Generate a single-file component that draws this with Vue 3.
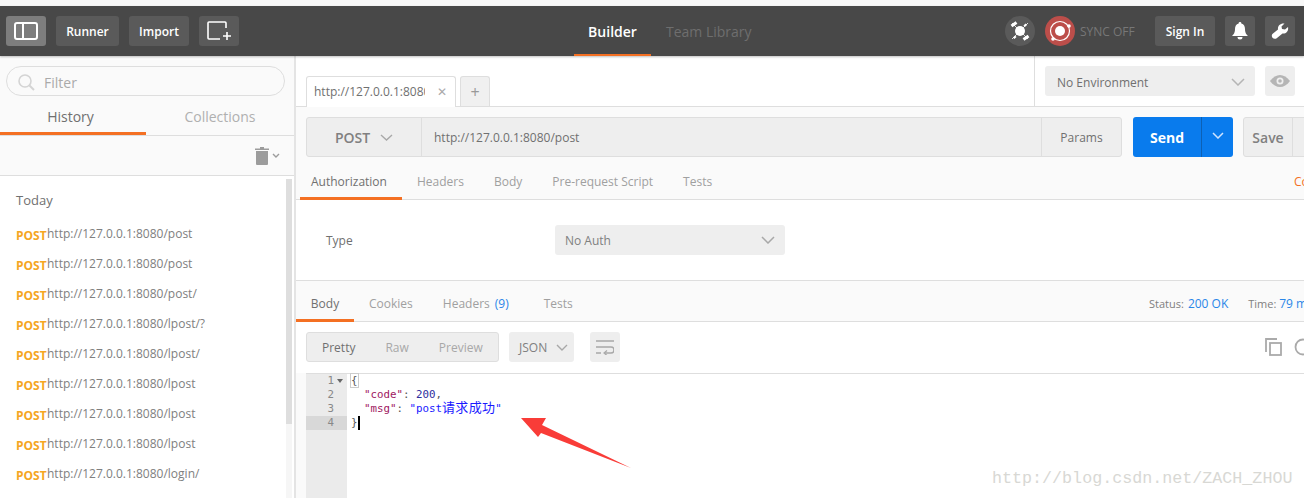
<script setup>
const history = ['post','post','post/','lpost/?','lpost/','lpost','lpost','lpost','login/']
</script>
<template>
  <div class="page">
    <div class="strip"></div>
    <header class="top">
      <div class="left">
        <button class="btn icon active"><svg width="24" height="18" viewBox="0 0 24 18"><rect x="1" y="1" width="22" height="16" rx="2" fill="none" stroke="#fff" stroke-width="2"/><path d="M9 1v16" stroke="#fff" stroke-width="2"/></svg></button>
        <button class="btn runner">Runner</button>
        <button class="btn import">Import</button>
        <button class="btn icon"><svg width="26" height="20" viewBox="0 0 26 20"><path d="M20 7V2a1 1 0 0 0-1-1H3a1 1 0 0 0-1 1v15a1 1 0 0 0 1 1h11" fill="none" stroke="#fff" stroke-width="1.6"/><path d="M21 11v8M17 15h8" stroke="#fff" stroke-width="1.6"/></svg></button>
      </div>
      <nav class="center">
        <span class="builder">Builder</span>
        <span class="team">Team Library</span>
      </nav>
      <div class="right">
        <span class="circle grey"><svg width="22" height="22" viewBox="0 0 22 22"><path d="M3 3l16 16M19 3 3 19" stroke="#fff" stroke-width=".8"/><circle cx="11" cy="11" r="5" fill="#fff"/><g stroke="#fff" stroke-width="3"><path d="M2.500 6 7.500 2.500M14.500 19.500l5-3.500M15.500 4.500l1.500 1.500M5 16.500l1.500 1.500"/></g></svg></span>
        <span class="circle red"><svg width="26" height="26" viewBox="0 0 26 26"><circle cx="13" cy="13" r="9.500" fill="none" stroke="#fff" stroke-width="1.200"/><circle cx="13" cy="13" r="5" fill="#fff"/><circle cx="22" cy="8" r="1.800" fill="#fff"/><circle cx="6" cy="21" r="1.800" fill="#fff"/></svg></span>
        <span class="sync">SYNC OFF</span>
        <button class="btn signin">Sign In</button>
        <button class="btn icon small"><svg width="16" height="18" viewBox="0 0 16 18"><path d="M8 0a1.300 1.300 0 0 1 1.300 1.500C12 2.200 13 4.500 13 7c0 4 1.500 5.500 3 7H0c1.500-1.500 3-3 3-7 0-2.500 1-4.800 3.700-5.500A1.300 1.300 0 0 1 8 0zM5.500 15h5a2.500 2.500 0 0 1-5 0z" fill="#fff"/></svg></button>
        <button class="btn icon small"><svg width="18" height="16" viewBox="0 0 18 16"><path d="M17 4c.8 3.500-1.500 7-5.500 6.500L6 15c-1.500 1.300-3.500 1-4.500-.2S.5 11.500 2 10.500L7 6.500C6.500 3 9 0 13.500.5L10.500 3.500 11 6l3 .5z" fill="#fff"/></svg></button>
      </div>
    </header>
    <div class="body">
      <aside class="side">
        <div class="filterwrap">
          <div class="filter">
            <svg width="18" height="18" viewBox="0 0 18 18"><circle cx="8" cy="8" r="6" fill="none" stroke="#d4d4d4" stroke-width="1.600"/><path d="M12.500 12.500 17 17" stroke="#d4d4d4" stroke-width="2"/></svg>
            <span>Filter</span>
          </div>
        </div>
        <div class="sidetabs">
          <span class="st on">History</span>
          <span class="st">Collections</span>
        </div>
        <div class="trashrow">
          <svg width="14" height="18" viewBox="0 0 14 18"><path d="M5 0h4v1.500h5V3H0V1.500h5zM1 4h12v13a1 1 0 0 1-1 1H2a1 1 0 0 1-1-1z" fill="#9c9c9c"/></svg>
          <svg width="8" height="5" viewBox="0 0 8 5"><path d="M1 1l3 3 3-3" fill="none" stroke="#9c9c9c" stroke-width="1.400"/></svg>
        </div>
        <div class="listwrap">
          <div class="list">
            <div class="today">Today</div>
            <div v-for="(h, i) in history" :key="i" class="item"><b>POST</b><span>http://127.0.0.1:8080/{{ h }}</span></div>
          </div>
          <div class="track"><div class="thumb"></div></div>
        </div>
      </aside>
      <main class="main">
        <div class="tabbar">
          <div class="tabs">
            <div class="tab"><span class="tabname">http://127.0.0.1:8080/post</span><span class="x">✕</span></div>
            <div class="plus">+</div>
          </div>
          <div class="env">
            <div class="envsel"><span>No Environment</span><svg width="14" height="8" viewBox="0 0 14 8"><path d="M1 1l6 6 6-6" fill="none" stroke="#b5b5b5" stroke-width="1.500"/></svg></div>
            <div class="eye"><svg width="20" height="12" viewBox="0 0 20 12"><path d="M0 6c3-4 6.500-6 10-6s7 2 10 6c-3 4-6.500 6-10 6S3 10 0 6z" fill="#b5b5b5"/><circle cx="10" cy="6" r="3.500" fill="#eee"/><circle cx="10" cy="6" r="1.800" fill="#b5b5b5"/></svg></div>
          </div>
        </div>
        <div class="reqrow">
          <div class="urlbox">
            <div class="method"><span>POST</span><svg width="13" height="7" viewBox="0 0 13 7"><path d="M1 1l5.500 5 5.500-5" fill="none" stroke="#a8a8a8" stroke-width="1.400"/></svg></div>
            <div class="url">http://127.0.0.1:8080/post</div>
            <div class="params">Params</div>
          </div>
          <div class="send"><span class="sendl">Send</span><span class="sendr"><svg width="12" height="7" viewBox="0 0 12 7"><path d="M1 1l5 5 5-5" fill="none" stroke="#cfe4ff" stroke-width="1.500"/></svg></span></div>
          <div class="save"><span class="savel">Save</span><span class="saver"></span></div>
        </div>
        <div class="reqtabs">
          <span class="rt on auth">Authorization</span>
          <span class="rt">Headers</span>
          <span class="rt">Body</span>
          <span class="rt">Pre-request Script</span>
          <span class="rt">Tests</span>
          <span class="code">Code</span>
        </div>
        <div class="authpane">
          <span class="type">Type</span>
          <div class="noauth"><span>No Auth</span><svg width="14" height="8" viewBox="0 0 14 8"><path d="M1 1l6 6 6-6" fill="none" stroke="#a8a8a8" stroke-width="1.500"/></svg></div>
        </div>
        <div class="restabs">
          <span class="rs on body-t">Body</span>
          <span class="rs cookies">Cookies</span>
          <span class="rs hdr">Headers <em>(9)</em></span>
          <span class="rs tests">Tests</span>
          <div class="status">Status: <em>200 OK</em><span class="time">Time: <em>79 ms</em></span></div>
        </div>
        <div class="toolbar">
          <div class="seg"><span class="sg on">Pretty</span><span class="sg">Raw</span><span class="sg">Preview</span></div>
          <div class="json"><span>JSON</span><svg width="12" height="7" viewBox="0 0 12 7"><path d="M1 1l5 5 5-5" fill="none" stroke="#a8a8a8" stroke-width="1.400"/></svg></div>
          <div class="wrap"><svg width="18" height="15" viewBox="0 0 18 15"><path d="M0 1h18M0 7h15a2.500 2.500 0 0 1 0 6H9M0 13h5" fill="none" stroke="#a8a8a8" stroke-width="1.400"/><path d="M11 10.500 8 13l3 2.500" fill="none" stroke="#a8a8a8" stroke-width="1.200"/></svg></div>
          <div class="tools">
            <svg width="18" height="18" viewBox="0 0 18 18"><path d="M12 1H1v13" fill="none" stroke="#aaa" stroke-width="1.800"/><rect x="5" y="5" width="11" height="12" fill="none" stroke="#aaa" stroke-width="1.800"/></svg>
            <svg class="search" width="18" height="18" viewBox="0 0 18 18"><circle cx="9" cy="9" r="7.500" fill="none" stroke="#aaa" stroke-width="1.800"/></svg>
          </div>
        </div>
        <div class="editor">
          <div class="gutter">
            <div class="ln"><span>1</span><i></i></div>
            <div class="ln">2</div>
            <div class="ln">3</div>
            <div class="ln cur">4</div>
          </div>
          <div class="codearea">
            <div class="cl"><span class="brace">{</span></div>
            <div class="cl ind"><span class="k">"code"</span>: <span class="n">200</span>,</div>
            <div class="cl ind"><span class="k">"msg"</span>: <span class="s">"post<span class="cjk">请求成功</span>"</span></div>
            <div class="cl">}<span class="caret"></span></div>
          </div>
        </div>
      </main>
    </div>
    <svg class="arrow" width="120" height="60" viewBox="0 0 120 60"><path d="M0 0 L25 0 L21 7 L110 50 L20 15 L17 19 Z" fill="#f93c38"/></svg>
    <div class="mark">http://blog.csdn.net/ZACH_ZHOU</div>
  </div>
</template>
<style scoped>
.page{position:relative;width:1304px;height:498px;overflow:hidden;background:#fafafa;font-family:"Open Sans","Noto Sans",sans-serif;color:#808080;display:flex;flex-direction:column}
.strip{height:6px;flex:none;background:#f8f8f8}
.top{height:50px;flex:none;background:#484848;display:flex;align-items:center;padding:0 9px 0 6px;box-shadow:0 1px 2px rgba(0,0,0,.25);position:relative}
.left{display:flex;gap:10px;width:568px}
.btn{height:30px;border:0;border-radius:3px;background:#5a5a5a;color:#fff;font:600 12px "Open Sans",sans-serif;padding:0;display:flex;align-items:center;justify-content:center}
.icon{width:40px}
.active{background:#7d7d7d}
.small{width:30px}
.runner{width:63px}
.import{width:60px}
.center{display:flex;align-self:stretch}
.builder{width:77px;color:#fff;font-size:14px;font-weight:600;display:flex;align-items:center;justify-content:center;border-bottom:2px solid #f47023;padding-top:2px;box-sizing:border-box}
.team{margin-left:15px;color:#6e6e6e;font-size:14px;display:flex;align-items:center;padding-top:1px}
.right{margin-left:auto;display:flex;align-items:center}
.circle{width:30px;height:30px;border-radius:50%;display:flex;align-items:center;justify-content:center}
.grey{background:#5a5a5a}
.red{background:#bc4e4a;margin-left:10px}
.sync{margin-left:5px;width:75px;color:#777;font-size:12px}
.signin{width:60px}
.right .small{margin-left:10px}
.body{flex:1;display:flex;min-height:0}
.side{width:296px;flex:none;background:#fafafa;border-right:2px solid #e4e4e4;box-sizing:border-box;display:flex;flex-direction:column}
.filterwrap{padding:10px 9px 0 6px}
.filter{height:30px;border:1px solid #dedede;border-radius:15px;box-sizing:border-box;display:flex;align-items:center;padding:2px 0 0 10px;gap:9px;font-size:14px;color:#aaa}
.sidetabs{display:flex;height:40px;border-bottom:1px solid #dedede;box-sizing:border-box;font-size:14px}
.st{width:146px;display:flex;align-items:center;justify-content:center;color:#b0b0b0;height:39px;box-sizing:border-box;padding-top:1px}
.st:last-child{width:148px}
.st.on{color:#707070;border-bottom:3px solid #f47023;padding:4px 5px 0 0}
.trashrow{height:40px;flex:none;border-bottom:1px solid #dedede;box-sizing:border-box;display:flex;align-items:center;justify-content:flex-end;gap:3px;padding:0 14px 0 0}
.listwrap{flex:1;display:flex;min-height:0;background:#fff;overflow:hidden}
.list{flex:1;padding-left:16px;font-size:12px}
.today{font-size:13px;color:#707070;height:26px;margin-top:14px;line-height:20px;margin-bottom:5px}
.item{height:30px;line-height:26px;display:flex;color:#808080;white-space:nowrap}
.item b{color:#f5a623;font-weight:700;font-size:12px;width:31px;padding-top:2px}
.track{width:6px;margin-right:2px;background:#f6f6f6;margin-top:3px}
.thumb{height:245px;background:#dedede}
.main{flex:none;width:1008px;display:flex;flex-direction:column;background:#fafafa}
.tabbar{height:51px;flex:none;display:flex;border-bottom:1px solid #dedede;box-sizing:border-box;background:#fff}
.tabs{width:738px;display:flex;align-items:flex-end;padding-left:10px;gap:4px;box-sizing:border-box}
.tab{width:150px;height:31px;box-sizing:border-box;border:1px solid #dedede;border-bottom:0;background:#fff;display:flex;align-items:center;padding:0 0 2px 7px;font-size:12px;color:#707070;margin-bottom:-1px;border-radius:3px 3px 0 0;position:relative}
.tabname{width:111px;overflow:hidden;white-space:nowrap;flex:none}
.x{margin-left:12px;font-size:12px;color:#aaa}
.plus{width:30px;height:30px;box-sizing:border-box;border:1px solid #dedede;border-bottom:0;background:#f0f0f0;display:flex;align-items:center;justify-content:center;font-size:16px;color:#999;border-radius:3px 3px 0 0}
.env{flex:1;border-left:1px solid #dedede;display:flex;gap:10px;padding:10px 0 0 10px}
.envsel{width:210px;height:30px;background:#eee;border-radius:3px;display:flex;align-items:center;justify-content:space-between;padding:2px 10px 0 12px;box-sizing:border-box;font-size:12px;color:#707070}
.eye{width:30px;height:30px;background:#eee;border-radius:3px;display:flex;align-items:center;justify-content:center}
.reqrow{display:flex;padding:10px 0 0 10px;height:50px;box-sizing:border-box;flex:none;width:1060px}
.urlbox{flex:none;width:816px;height:40px;display:flex;border:1px solid #dedede;border-radius:3px;box-sizing:border-box;background:#eee;font-size:12px}
.method{width:115px;display:flex;align-items:center;justify-content:center;gap:10px;font-size:14px;font-weight:600;color:#808080;border-right:1px solid #dedede;box-sizing:border-box}
.url{flex:1;display:flex;align-items:center;padding-left:12px;color:#707070;border-right:1px solid #dedede}
.params{width:79px;display:flex;align-items:center;justify-content:center;color:#707070;font-size:12px}
.send{flex:none;margin-left:11px;width:100px;height:40px;background:#097bed;border-radius:3px;display:flex;color:#fff;font-size:14px;font-weight:700}
.sendl{width:69px;display:flex;align-items:center;justify-content:center;border-right:1px solid #0c60b4;box-sizing:border-box}
.sendr{flex:1;display:flex;align-items:center;justify-content:center;padding-bottom:3px}
.save{flex:none;margin-left:10px;width:100px;height:40px;box-sizing:border-box;border:1px solid #dedede;border-radius:3px;background:#eee;display:flex;font-size:14px;font-weight:600;color:#808080}
.savel{width:49px;display:flex;align-items:center;justify-content:center;border-right:1px solid #dedede;box-sizing:border-box}
.reqtabs{height:36px;box-sizing:border-box;flex:none;margin-top:7px;display:flex;align-items:stretch;border-bottom:1px solid #dedede;font-size:12px;color:#a0a0a0;padding-left:4px;position:relative}
.rt{display:flex;align-items:center;justify-content:center;padding:0 11px;margin-right:8px;box-sizing:border-box}
.rt.on{color:#707070;border-bottom:3px solid #f47023;padding:2px 15px 0 11px;width:102px;margin-bottom:-1px;margin-right:4px}
.code{color:#f47023;display:flex;align-items:center;width:10px;overflow:hidden;white-space:nowrap;position:absolute;left:998px;top:0;bottom:0}
.authpane{height:81px;flex:none;border-bottom:1px solid #dedede;box-sizing:border-box;display:flex;align-items:center;padding:0 0 0 30px;font-size:12px;color:#707070;background:#fff}
.type{width:229px}
.noauth{width:230px;height:30px;background:#eee;border-radius:3px;display:flex;align-items:center;justify-content:space-between;padding:0 10px;box-sizing:border-box;color:#808080}
.restabs{height:41px;flex:none;display:flex;border-bottom:1px solid #dedede;box-sizing:border-box;font-size:12px;color:#a0a0a0;position:relative;background:#fafafa}
.rs{display:flex;align-items:center;justify-content:center;gap:5px;padding:4px 15px 0}
.rs em,.status em{font-style:normal;color:#2a86e8;font-size:12px}
.rs.on{color:#707070;border-bottom:3px solid #f47023;margin-bottom:-1px;padding-top:7px;width:58px;box-sizing:border-box}
.tests{margin-left:5px}
.status{margin-left:auto;display:flex;align-items:center;gap:4px;font-size:11px;color:#808080;white-space:nowrap;width:155px;flex:none;box-sizing:border-box;padding-top:4px}
.time{margin-left:16px}
.toolbar{height:51px;flex:none;background:#fff;display:flex;padding:10px 0 0 10px;box-sizing:border-box;position:relative;width:1008px}
.seg{width:193px;height:30px;background:#eee;border:1px solid #dedede;border-radius:3px;box-sizing:border-box;display:flex;align-items:center;font-size:12px;color:#a8a8a8;padding-left:15px}
.sg{margin-right:30px}
.sg.on{color:#707070}
.json{margin-left:10px;width:65px;height:30px;background:#eee;border-radius:3px;display:flex;align-items:center;gap:9px;padding-left:10px;box-sizing:border-box;font-size:12px;color:#808080}
.wrap{margin-left:16px;width:30px;height:30px;background:#eee;border-radius:3px;display:flex;align-items:center;justify-content:center}
.tools{position:absolute;left:969px;top:16px;display:flex;gap:11px}
.editor{flex:1;background:#fff;margin-left:10px;border-top:1px solid #dedede;display:flex;font:10.800px/14px "DejaVu Sans Mono","Liberation Mono",monospace;color:#555;min-height:0}
.gutter{width:41px;background:#ebebeb;flex:none}
.ln{height:14px;text-align:right;padding-right:13px;color:#888;position:relative}
.ln i{position:absolute;left:31px;top:5px;border:3px solid transparent;border-top:4px solid #666;border-bottom:0}
.ln.cur{background:#d8d8d8}
.codearea{padding-left:4px;white-space:pre}
.cl{height:14px}
.ind{padding-left:13px}
.brace{outline:1px solid #ccc}
.k{color:#a0175f}
.n{color:#2e2e9e}
.s{color:#1a1aff}
.cjk{font-family:"Noto Sans CJK SC",sans-serif;font-size:13px;line-height:0;letter-spacing:.3px}
.caret{display:inline-block;width:2px;height:14px;background:#000;vertical-align:top}
.arrow{position:absolute;left:521px;top:418px;pointer-events:none}
.mark{position:absolute;left:992px;top:469px;font:16.700px "Liberation Mono","DejaVu Sans Mono",monospace;color:#d8d8d4;white-space:nowrap}
</style>
